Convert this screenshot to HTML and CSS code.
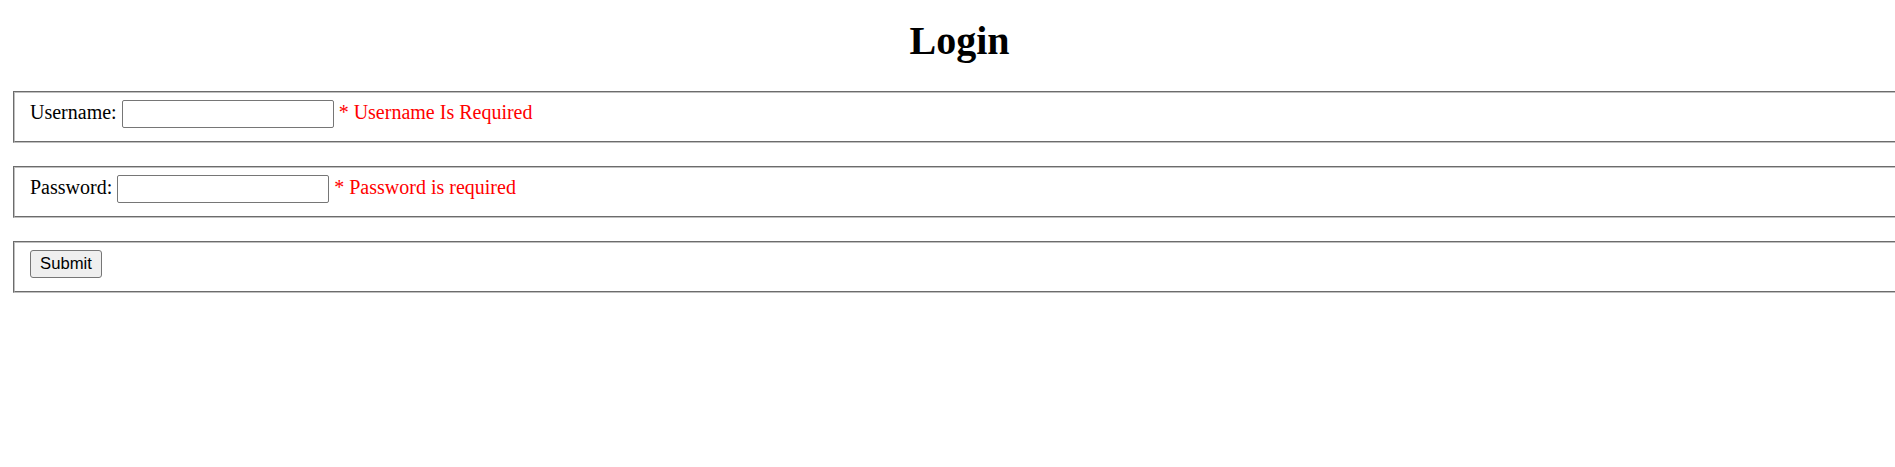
FILE: index.html
```html
<!DOCTYPE html>
<html lang="en">
<head>
<meta charset="utf-8">
<title>Login</title>
<link rel="stylesheet" href="styles.css">
</head>
<body>
<div class="page">
  <h1 class="title">Login</h1>
  <form class="login-form">
    <fieldset class="group">
      <div class="row">
        <label class="label" for="username">Username:</label>
        <input class="field" id="username" type="text">
        <span class="error">* Username Is Required</span>
      </div>
    </fieldset>
    <fieldset class="group">
      <div class="row">
        <label class="label" for="password">Password:</label>
        <input class="field" id="password" type="password">
        <span class="error">* Password is required</span>
      </div>
    </fieldset>
    <fieldset class="group">
      <div class="row">
        <button class="submit" type="submit">Submit</button>
      </div>
    </fieldset>
  </form>
</div>
</body>
</html>
```

FILE: styles.css
```css
html, body {
  margin: 0;
  padding: 0;
  background: #ffffff;
}
body {
  overflow: hidden;
  font-family: "Liberation Serif", "Times New Roman", serif;
  font-size: 20px;
  color: #000000;
}
.page {
  width: 1899px;
  margin-left: 10px;
}
.title {
  margin: 18px 0 27px;
  font-size: 40px;
  line-height: 46px;
  font-weight: bold;
  text-align: center;
}
.login-form {
  margin: 0;
}
.group {
  margin: 0 3px 23px;
  padding: 7px 15px 13px;
  border: 2px groove #c0c0c0;
  min-width: 0;
}
.row {
  display: flex;
  align-items: baseline;
  gap: 5px;
  height: 28px;
}
.label {
  line-height: 23px;
}
.field {
  box-sizing: border-box;
  width: 212px;
  height: 28px;
  margin: 0;
  padding: 1px 3px;
  border: 1px solid #767676;
  border-radius: 2px;
  background: #ffffff;
  font-family: "Liberation Sans", Arial, sans-serif;
  font-size: 16.67px;
}
.error {
  color: #ff0000;
  line-height: 23px;
}
.submit {
  box-sizing: border-box;
  width: 72px;
  height: 28px;
  margin: 0;
  padding: 0 8px;
  border: 1px solid #767676;
  border-radius: 3px;
  background: #efefef;
  color: #000000;
  font-family: "Liberation Sans", Arial, sans-serif;
  font-size: 16.67px;
}
```
